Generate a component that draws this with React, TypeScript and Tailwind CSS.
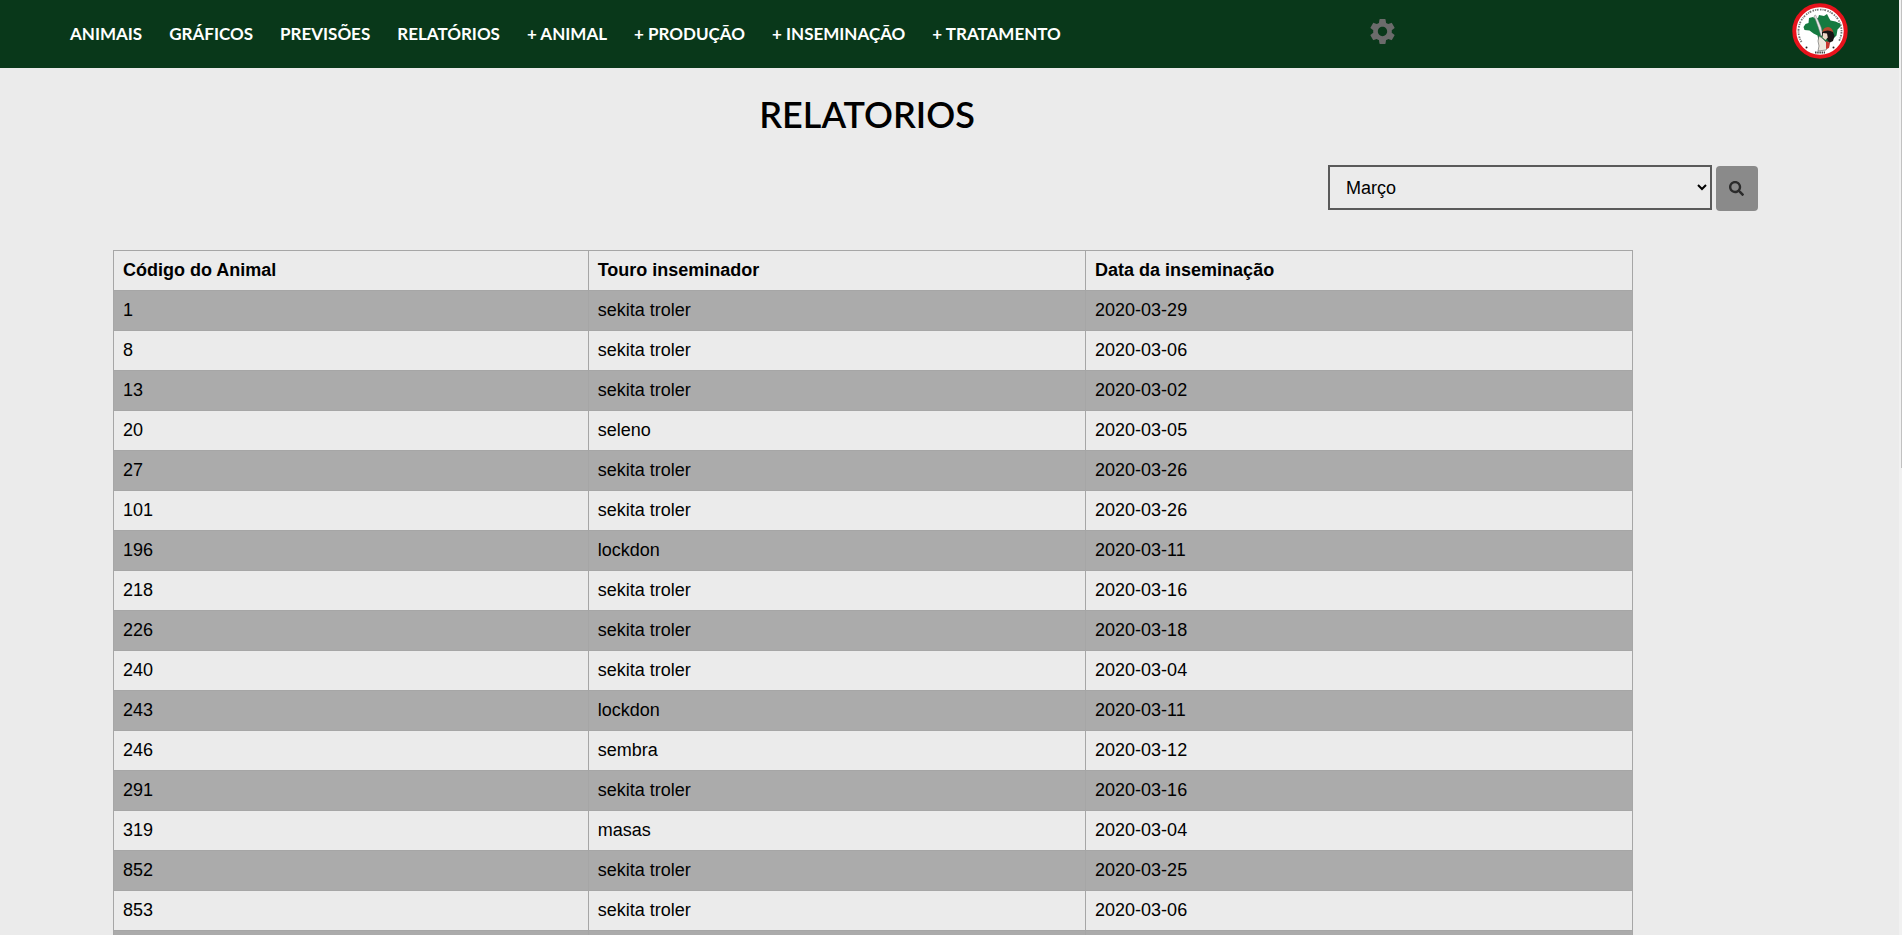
import { MdSettings } from "react-icons/md";
import { FaSearch } from "react-icons/fa";

const links = [
  "ANIMAIS",
  "GRÁFICOS",
  "PREVISÕES",
  "RELATÓRIOS",
  "+ ANIMAL",
  "+ PRODUÇÃO",
  "+ INSEMINAÇÃO",
  "+ TRATAMENTO",
];

const months = [
  "Janeiro", "Fevereiro", "Março", "Abril", "Maio", "Junho",
  "Julho", "Agosto", "Setembro", "Outubro", "Novembro", "Dezembro",
];

const rows: [string, string, string][] = [
  ["1", "sekita troler", "2020-03-29"],
  ["8", "sekita troler", "2020-03-06"],
  ["13", "sekita troler", "2020-03-02"],
  ["20", "seleno", "2020-03-05"],
  ["27", "sekita troler", "2020-03-26"],
  ["101", "sekita troler", "2020-03-26"],
  ["196", "lockdon", "2020-03-11"],
  ["218", "sekita troler", "2020-03-16"],
  ["226", "sekita troler", "2020-03-18"],
  ["240", "sekita troler", "2020-03-04"],
  ["243", "lockdon", "2020-03-11"],
  ["246", "sembra", "2020-03-12"],
  ["291", "sekita troler", "2020-03-16"],
  ["319", "masas", "2020-03-04"],
  ["852", "sekita troler", "2020-03-25"],
  ["853", "sekita troler", "2020-03-06"],
  ["", "", ""],
];

function Logo() {
  return (
    <svg viewBox="0 0 56 56" className="size-14" role="img" aria-label="Logo">
      <circle cx="28" cy="28" r="25.7" fill="#fff" stroke="#e8131c" strokeWidth="4" />
      <path d="M9.5 39A21.5 21.5 0 1 1 46.5 39" fill="none" stroke="#3c3c3c" strokeWidth="1.8" strokeDasharray="1.5 1 1 .8 1.8 1.4" opacity="0.7" />
      <path d="M11.5 24l2-3 3-1 .5-5 4-1 2 1.5 3-.5 1-3 5 1 3-2 2 4 1.500 2.500 5 1 4.500 2 .500 3-3 3-1 6-3 3-4 1-2 4-4 5-3-2 1-3-3-3-1-5-4-2-4-3-5-.500z" fill="#157a40" />
      <path d="M22 13l2 5 2.500 7 2.500 8 2-1-2-8-3-7-2.500-5z" fill="#e6e6e6" stroke="#777" strokeWidth=".5" />
      <path d="M30 30q1-6 6-6 4.500.500 5.500 6-5-2.500-11.500 0z" fill="#b5492f" />
      <path d="M30 29q6-3 11 0l1.500 4-1.500 5-4 2-2-4-5-3z" fill="#191414" />
      <path d="M31 30l4 .5.8 4-2.300 2.500-3-2.500z" fill="#efd9c9" />
      <path d="M27 33l3 2 4 4 3 4-3 4-8 1 1-5-1-5z" fill="#ece6dc" stroke="#5a5a5a" strokeWidth=".6" />
      <path d="M34 38l4 2-1 5-3 1z" fill="#c8362f" />
      <path d="M23 49.500h10" stroke="#444" strokeWidth="2" strokeDasharray="1.500 .7" />
      <circle cx="14.500" cy="44.500" r="1" fill="#222" />
      <circle cx="41.500" cy="44.500" r="1" fill="#222" />
    </svg>
  );
}

export default function App() {
  return (
    <div className="flex h-screen bg-[#ebebeb] font-['Liberation_Sans',Arial,sans-serif] text-lg text-black">
      <div className="min-w-0 flex-1 overflow-y-auto">
        <header className="flex h-17 items-center bg-[#09381a] pr-[51px] pl-[70px]">
          <nav className="flex gap-[27px] font-['Lato',sans-serif] text-[17px] font-bold text-white">
            {links.map((label) => (
              <a key={label} href="#" className="whitespace-nowrap">
                {label}
              </a>
            ))}
          </nav>
          <div className="flex flex-1 items-center justify-between pb-1.5 pl-[306px]">
            <button type="button" aria-label="Configurações" className="text-[#6b6b6b]">
              <MdSettings size={31} />
            </button>
            <Logo />
          </div>
        </header>

        <main className="min-h-[190vh] pt-[19px] pl-[113px]">
          <h1 className="w-[1508px] max-w-full text-center font-['Lato',sans-serif] text-4xl leading-[54px] font-semibold">
            RELATORIOS
          </h1>

          <form className="mt-6 flex w-[92.1%] justify-end gap-1" onSubmit={(e) => e.preventDefault()}>
            <select
              aria-label="Mês"
              defaultValue="Março"
              className="h-[45px] w-96 border-2 border-[#5a5a5a] bg-[#ebebeb] px-3 text-lg"
            >
              {months.map((m) => (
                <option key={m}>{m}</option>
              ))}
            </select>
            <button
              type="submit"
              aria-label="Pesquisar"
              className="mt-px flex h-[45px] w-[42px] items-center justify-center rounded bg-[#8a8a8a] text-[#2b2b2b]"
            >
              <FaSearch size={15} />
            </button>
          </form>

          <table className="mt-[39px] w-[85.1%] table-fixed border-collapse text-left leading-[23px]">
            <colgroup>
              <col className="w-[31.25%]" />
              <col className="w-[32.75%]" />
              <col />
            </colgroup>
            <thead>
              <tr>
                {["Código do Animal", "Touro inseminador", "Data da inseminação"].map((h) => (
                  <th key={h} className="border border-[#a6a6a6] px-[9px] py-2 font-bold">{h}</th>
                ))}
              </tr>
            </thead>
            <tbody>
              {rows.map((row) => (
                <tr key={row[0]} className="h-10 odd:bg-[#ababab]">
                  {row.map((cell, i) => (
                    <td key={i} className="border border-[#a6a6a6] px-[9px] py-2">{cell}</td>
                  ))}
                </tr>
              ))}
            </tbody>
          </table>
        </main>
      </div>
      <div aria-hidden="true" className="w-[3px] bg-[#f1f1f1] pl-[2px]">
        <div className="h-1/2 bg-[#c1c1c1]" />
      </div>
    </div>
  );
}
